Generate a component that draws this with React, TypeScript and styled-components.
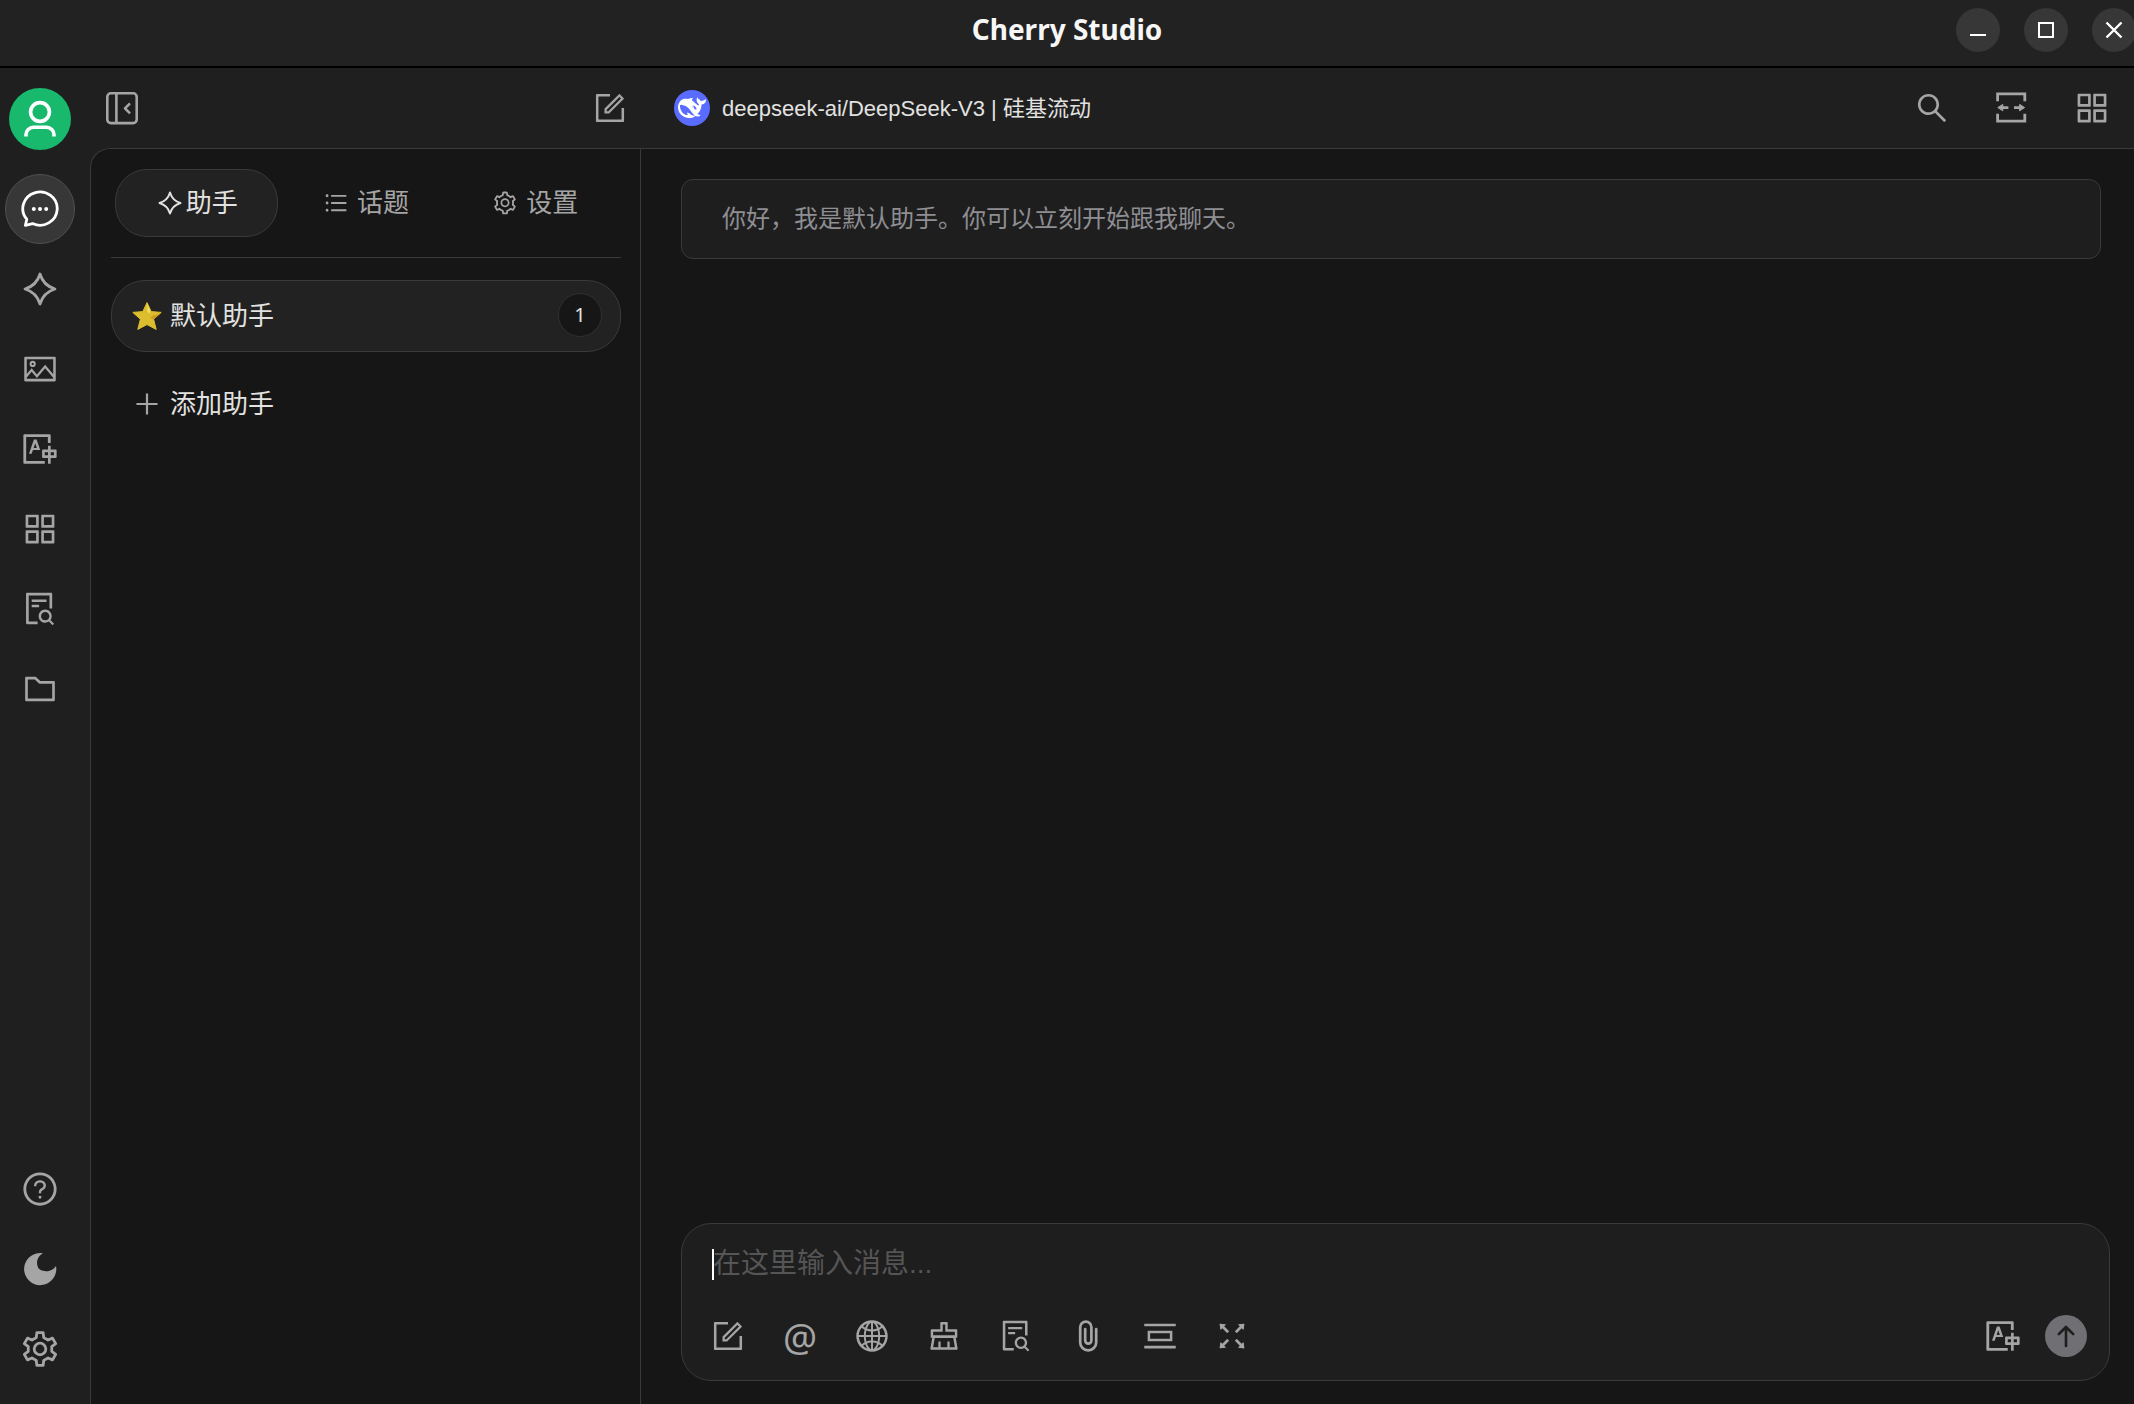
import React from "react";
import styled, { createGlobalStyle, css } from "styled-components";
import {
  AiOutlineAppstore,
  AiOutlineClear,
  AiOutlineFileSearch,
  AiOutlineFolder,
  AiOutlineForm,
  AiOutlineFullscreen,
  AiOutlineGlobal,
  AiOutlinePicCenter,
  AiOutlinePicture,
  AiOutlinePlus,
  AiOutlineQuestionCircle,
  AiOutlineSearch,
  AiOutlineSetting,
  AiOutlineTranslation,
  AiOutlineUnorderedList,
} from "react-icons/ai";

const color = {
  title: "#222222",
  chrome: "#1f1f1f",
  panel: "#161616",
  raised: "#222222",
  card: "#1e1e1e",
  border: "#3a3a3a",
  icon: "#a5a5a5",
  text: "#e2e2e0",
  muted: "#8e8e93",
  green: "#18b96c",
};

const GlobalStyle = createGlobalStyle`
  * { box-sizing: border-box; }
  body {
    margin: 0;
    background: ${color.chrome};
    color: ${color.text};
    font-family: "Liberation Sans", "Noto Sans CJK SC", sans-serif;
  }
  button, textarea { font-family: inherit; }
`;

const Window = styled.div`
  display: flex;
  flex-direction: column;
  height: 100vh;
  overflow: hidden;
`;

const TitleBar = styled.header`
  display: grid;
  grid-template-columns: 1fr auto 1fr;
  align-items: center;
  height: 68px;
  padding-bottom: 6px;
  background: ${color.title};
  border-bottom: 2px solid #000;
  flex: none;
`;

const WindowTitle = styled.h1`
  grid-column: 2;
  margin: 0 0 2px;
  color: #f7f7f7;
  font: 700 28px/40px "Noto Sans", sans-serif;
`;

const WindowControls = styled.div`
  display: flex;
  justify-content: flex-end;
  gap: 24px;
  margin-right: -2px;
`;

const bareButton = css`
  display: flex;
  align-items: center;
  justify-content: center;
  padding: 0;
  border: 0;
  background: none;
  color: ${color.icon};
  cursor: pointer;
`;

const WindowButton = styled.button`
  ${bareButton}
  width: 44px;
  height: 44px;
  border-radius: 50%;
  background: #373737;
  color: #fff;
`;

const Body = styled.div`
  display: flex;
  flex: 1;
  min-height: 0;
`;

const Rail = styled.nav`
  display: flex;
  flex-direction: column;
  justify-content: space-between;
  width: 80px;
  padding: 20px 5px;
  flex: none;
`;

const RailGroup = styled.div`
  display: flex;
  flex-direction: column;
  align-items: center;
  gap: 10px;
`;

const Avatar = styled.button`
  ${bareButton}
  width: 62px;
  height: 62px;
  margin-bottom: 14px;
  border-radius: 50%;
  background: ${color.green};
  color: #fff;
`;

const RailButton = styled.button<{ $active?: boolean }>`
  ${bareButton}
  width: 70px;
  height: 70px;
  border-radius: 50%;
  border: 1px solid ${(p) => (p.$active ? "#505050" : "transparent")};
  background: ${(p) => (p.$active ? "#373737" : "none")};
  color: ${(p) => (p.$active ? "#fff" : color.icon)};
`;

const Workspace = styled.div`
  display: flex;
  flex-direction: column;
  flex: 1;
  min-width: 0;
`;

const Toolbar = styled.div`
  display: flex;
  height: 80px;
  flex: none;
`;

const PanelToolbar = styled.div`
  display: flex;
  align-items: center;
  justify-content: space-between;
  width: 560px;
  padding: 0 8px 0 20px;
  flex: none;
`;

const ChatToolbar = styled.div`
  display: flex;
  align-items: center;
  justify-content: space-between;
  flex: 1;
  padding: 0 20px 0 34px;
`;

const ToolButton = styled.button`
  ${bareButton}
  width: 44px;
  height: 44px;
`;

const ToolGroup = styled.div`
  display: flex;
  gap: 36px;
`;

const ModelButton = styled.button`
  ${bareButton}
  gap: 12px;
  color: ${color.text};
  font-size: 22px;
  line-height: 36px;
`;

const ModelName = styled.span`
  padding-top: 2px;
`;

const ModelLogo = styled.span`
  display: flex;
  align-items: center;
  justify-content: center;
  width: 36px;
  height: 36px;
  border-radius: 50%;
  background: #5a6cff;
  color: #fff;
`;

const Content = styled.div`
  display: flex;
  flex: 1;
  min-height: 0;
  margin-left: 10px;
  border: solid ${color.border};
  border-width: 1px 0 0 1px;
  border-top-left-radius: 20px;
  background: ${color.panel};
`;

const AssistantPanel = styled.aside`
  width: 550px;
  padding: 20px 19px 20px 20px;
  border-right: 1px solid ${color.border};
  flex: none;
`;

const Tabs = styled.div`
  display: flex;
  gap: 6px;
  padding: 0 4px 20px;
  border-bottom: 1px solid ${color.border};
  margin-bottom: 22px;
`;

const Tab = styled.button<{ $active?: boolean }>`
  ${bareButton}
  flex: 1;
  gap: ${(p) => (p.$active ? "2px" : "8px")};
  height: 68px;
  border-radius: 32px;
  border: 1px solid ${(p) => (p.$active ? color.border : "transparent")};
  background: ${(p) => (p.$active ? color.raised : "none")};
  color: ${(p) => (p.$active ? color.text : color.icon)};
  font-size: 26px;
  line-height: 40px;
`;

const AssistantItem = styled.button<{ $active?: boolean }>`
  ${bareButton}
  justify-content: flex-start;
  gap: 8px;
  width: 100%;
  height: 72px;
  padding: 0 18px 0 20px;
  margin-bottom: 16px;
  border-radius: 34px;
  border: 1px solid ${(p) => (p.$active ? color.border : "transparent")};
  background: ${(p) => (p.$active ? color.raised : "none")};
  color: ${color.text};
  font-size: 26px;
  line-height: 40px;
`;

const ItemIcon = styled.span`
  display: flex;
  justify-content: center;
  width: 30px;
  color: ${color.icon};
`;

const CountBadge = styled.span`
  display: flex;
  align-items: center;
  justify-content: center;
  width: 44px;
  height: 44px;
  margin: 0 0 2px auto;
  border: 1px solid #303030;
  border-radius: 50%;
  background: ${color.panel};
  font: 20px/24px "Noto Sans", sans-serif;
`;

const Chat = styled.main`
  display: flex;
  flex-direction: column;
  justify-content: space-between;
  flex: 1;
  min-width: 0;
  padding: 30px 24px 23px 40px;
`;

const Greeting = styled.p`
  margin: 0 9px 0 0;
  padding: 19px 40px;
  border: 1px solid ${color.border};
  border-radius: 12px;
  background: ${color.card};
  color: ${color.muted};
  font-size: 24px;
  line-height: 40px;
`;

const Composer = styled.form`
  padding: 20px 22px 14px 16px;
  border: 1px solid ${color.border};
  border-radius: 30px;
  background: ${color.card};
`;

const InputRow = styled.div`
  display: flex;
  align-items: center;
  padding-left: 14px;
`;

const Caret = styled.span`
  width: 2px;
  height: 31px;
  margin-right: -1px;
  background: #fff;
`;

const MessageInput = styled.textarea`
  flex: 1;
  height: 40px;
  padding: 0;
  border: 0;
  outline: 0;
  resize: none;
  overflow: hidden;
  background: none;
  color: ${color.text};
  font-size: 28px;
  line-height: 40px;
  &::placeholder { color: #555555; }
`;

const ComposerTools = styled.div`
  display: flex;
  align-items: center;
  gap: 12px;
  height: 60px;
  margin-top: 22px;
`;

const ComposerButton = styled.button`
  ${bareButton}
  width: 60px;
  height: 60px;
  font: 38px/40px "Noto Sans", sans-serif;
`;

const SendGroup = styled.div`
  display: flex;
  align-items: center;
  gap: 12px;
  margin-left: auto;
`;

const SendButton = styled.button`
  ${bareButton}
  width: 42px;
  height: 42px;
  border-radius: 50%;
  background: #6f6f74;
  color: ${color.card};
`;

type DrawingProps = { size?: number; box?: number; weight?: number; children: React.ReactNode };

const Drawing = ({ size = 40, box = 40, weight = 3, children }: DrawingProps) => (
  <svg
    width={size}
    height={size}
    viewBox={`0 0 ${box} ${box}`}
    fill="none"
    stroke="currentColor"
    strokeWidth={weight}
    strokeLinejoin="round"
    aria-hidden="true"
  >
    {children}
  </svg>
);

const UserIcon = () => (
  <Drawing weight={3.6}>
    <circle cx="20" cy="13" r="9.4" />
    <path d="M6 37.4v-1.6a7.5 7.5 0 0 1 7.5-7.5h13a7.5 7.5 0 0 1 7.5 7.5v1.6" />
  </Drawing>
);

const ChatIcon = () => (
  <Drawing weight={2.8}>
    <path d="M5.400 36.400 6.800 30.200A17.200 16.600 0 1 1 12.700 34.600Z" />
    <g fill="currentColor" stroke="none">
      <circle cx="13.8" cy="20" r="2" />
      <circle cx="20" cy="20" r="2" />
      <circle cx="26.2" cy="20" r="2" />
    </g>
  </Drawing>
);

const SparkIcon = ({ size = 40, weight = 2.8 }: { size?: number; weight?: number }) => (
  <Drawing size={size} weight={weight}>
    <path d="M20 5Q23.4 16.6 35 20Q23.4 23.4 20 35Q16.6 23.4 5 20Q16.6 16.6 20 5Z" />
  </Drawing>
);

const MoonIcon = () => (
  <Drawing>
    <path
      fill="currentColor"
      stroke="none"
      d="M23 4.2A10.8 10.8 0 0 0 18.6 19.4A11.6 11.6 0 0 0 36 17A16.1 16.1 0 1 1 23 4.2Z"
    />
  </Drawing>
);

/* Six-toothed gear outline, built tooth by tooth round the centre. */
const gearOutline = () => {
  const at = (deg: number, r: number) => {
    const a = (deg * Math.PI) / 180;
    return `${(20 + r * Math.cos(a)).toFixed(2)} ${(20 + r * Math.sin(a)).toFixed(2)}`;
  };
  return (
    [0, 1, 2, 3, 4, 5]
      .map((i) => {
        const t = -90 + i * 60;
        return `${i ? "L" : "M"}${at(t - 18, 12)}L${at(t - 11, 16.6)}L${at(t + 11, 16.6)}L${at(t + 18, 12)}`;
      })
      .join("") + "Z"
  );
};

const GearIcon = () => (
  <Drawing weight={2.8}>
    <path d={gearOutline()} />
    <circle cx="20" cy="20" r="5.8" />
  </Drawing>
);

const CollapseIcon = () => (
  <Drawing weight={2.6}>
    <rect x="5.3" y="5.3" width="29.4" height="29.8" rx="3.6" />
    <path d="M14.4 5.3v29.8M28 15.4l-5 5 5 5" />
  </Drawing>
);

const WidthIcon = () => (
  <Drawing weight={2.8}>
    <path strokeLinejoin="miter" d="M5.6 13.2V5.800h27.200v7.400M5.600 25.800v7.400h27.200v-7.400" />
    <path d="M9 19.600h7.400M22 19.600h7.400" />
    <path
      fill="currentColor"
      strokeWidth="1"
      d="M5.800 19.600l5-3.200v6.400zM32.600 19.600l-5-3.200v6.400z"
    />
  </Drawing>
);

const ClipIcon = () => (
  <Drawing weight={2.7}>
    <path
      strokeLinecap="round"
      d="M28.200 13.200V26.400a8 8 0 0 1-16 0V11.200a5.600 5.600 0 0 1 11.200 0V24.600a3.100 3.100 0 0 1-6.200 0V13.200"
    />
  </Drawing>
);

const StarIcon = () => (
  <svg width="30" height="30" viewBox="0 0 30 30" aria-hidden="true">
    <path
      fill="#dcbd2e"
      stroke="#dcbd2e"
      strokeWidth="1"
      strokeLinejoin="round"
      d="M15 1.6 19.2 10.6 29.2 11.4 21.6 18.2 24.2 28.4 15 23.6 5.8 28.4 8.4 18.2.8 11.4 10.8 10.6Z"
    />
    <path fill="#ece05c" d="M15 2 18.4 10 17.5 12.5 15.5 11Z" />
    <path fill="#d09a1e" d="M21.5 14.5 27.5 13 21.5 18.5 18 16.5Z" />
  </svg>
);

const DeepSeekIcon = () => (
  <svg width="28" height="28" viewBox="0 0 24 24" fill="currentColor" aria-hidden="true">
    <path d="M23.748 4.482c-.254-.124-.364.113-.512.234-.051.039-.094.09-.137.136-.372.397-.806.657-1.373.626-.829-.046-1.537.214-2.163.848-.133-.782-.575-1.248-1.247-1.548-.352-.156-.708-.311-.955-.65-.172-.241-.219-.51-.305-.774-.055-.16-.11-.323-.293-.35-.2-.031-.278.136-.356.276-.313.572-.434 1.202-.422 1.84.027 1.436.633 2.58 1.838 3.393.137.093.172.187.129.323-.082.28-.18.552-.266.833-.055.179-.137.217-.329.14a5.526 5.526 0 01-1.736-1.18c-.857-.828-1.631-1.742-2.597-2.458a11.365 11.365 0 00-.689-.471c-.985-.957.13-1.743.388-1.836.27-.098.093-.432-.779-.428-.872.004-1.67.295-2.687.684a3.055 3.055 0 01-.465.137 9.597 9.597 0 00-2.883-.102c-1.885.21-3.39 1.102-4.497 2.623C.082 8.606-.231 10.684.152 12.85c.403 2.284 1.569 4.175 3.36 5.653 1.858 1.533 3.997 2.284 6.438 2.14 1.482-.085 3.133-.284 4.994-1.86.47.234.962.327 1.78.397.63.059 1.236-.03 1.705-.128.735-.156.684-.837.419-.961-2.155-1.004-1.682-.595-2.113-.926 1.096-1.296 2.746-2.642 3.392-7.003.05-.347.007-.565 0-.845-.004-.17.035-.237.23-.256a4.173 4.173 0 001.545-.475c1.396-.763 1.96-2.015 2.093-3.517.02-.23-.004-.467-.247-.588zM11.581 18c-2.089-1.642-3.102-2.183-3.52-2.16-.392.024-.321.471-.235.763.09.288.207.486.371.739.114.167.192.416-.113.603-.673.416-1.842-.14-1.897-.167-1.361-.802-2.5-1.86-3.301-3.307-.774-1.393-1.224-2.887-1.298-4.482-.02-.386.093-.522.477-.592a4.696 4.696 0 011.529-.039c2.132.312 3.946 1.265 5.468 2.774.868.86 1.525 1.887 2.202 2.891.72 1.066 1.494 2.082 2.48 2.914.348.292.625.514.891.677-.802.09-2.14.11-3.054-.614zm1-6.44a.306.306 0 01.415-.287.302.302 0 01.2.288.306.306 0 01-.31.307.303.303 0 01-.304-.308zm3.11 1.596c-.2.081-.399.151-.59.16a1.245 1.245 0 01-.798-.254c-.274-.23-.47-.358-.552-.758a1.73 1.73 0 01.016-.588c.07-.327-.008-.537-.239-.727-.187-.156-.426-.199-.688-.199a.559.559 0 01-.254-.078c-.11-.054-.2-.19-.114-.358.028-.054.16-.186.192-.21.356-.202.767-.136 1.146.016.352.144.618.408 1.001.782.391.451.462.576.685.914.176.265.336.537.445.848.067.195-.019.354-.25.452z" />
  </svg>
);

const ArrowUpIcon = () => (
  <Drawing size={42} box={42} weight={2.6}>
    <path strokeLinecap="round" d="M21 31V12.6M13.800 19.200 21 12l7.200 7.200" />
  </Drawing>
);

const railItems = [
  { label: "聊天", icon: <ChatIcon />, active: true },
  { label: "智能体", icon: <SparkIcon /> },
  { label: "绘画", icon: <AiOutlinePicture size={36} /> },
  { label: "翻译", icon: <AiOutlineTranslation size={38} /> },
  { label: "小程序", icon: <AiOutlineAppstore size={40} /> },
  { label: "知识库", icon: <AiOutlineFileSearch size={38} /> },
  { label: "文件", icon: <AiOutlineFolder size={38} /> },
];

const railFooter = [
  { label: "帮助", icon: <AiOutlineQuestionCircle size={38} /> },
  { label: "主题", icon: <MoonIcon /> },
  { label: "设置", icon: <GearIcon /> },
];

const composerTools = [
  { label: "新话题", icon: <AiOutlineForm size={36} /> },
  { label: "提及模型", icon: "@" },
  { label: "联网搜索", icon: <AiOutlineGlobal size={36} /> },
  { label: "清空消息", icon: <AiOutlineClear size={36} /> },
  { label: "选择知识库", icon: <AiOutlineFileSearch size={36} /> },
  { label: "上传附件", icon: <ClipIcon /> },
  { label: "清除上下文", icon: <AiOutlinePicCenter size={36} /> },
  { label: "展开", icon: <AiOutlineFullscreen size={36} /> },
];

export default function App() {
  return (
    <Window>
      <GlobalStyle />
      <TitleBar>
        <WindowTitle>Cherry Studio</WindowTitle>
        <WindowControls>
          <WindowButton aria-label="最小化">
            <Drawing size={20} box={20} weight={2}>
              <path d="M2 15h16" />
            </Drawing>
          </WindowButton>
          <WindowButton aria-label="最大化">
            <Drawing size={20} box={20} weight={2}>
              <path strokeLinejoin="miter" d="M3 3h14v14H3z" />
            </Drawing>
          </WindowButton>
          <WindowButton aria-label="关闭">
            <Drawing size={20} box={20} weight={2.4}>
              <path d="M2.5 2.5l15 15M17.5 2.5l-15 15" />
            </Drawing>
          </WindowButton>
        </WindowControls>
      </TitleBar>
      <Body>
        <Rail>
          <RailGroup>
            <Avatar aria-label="用户">
              <UserIcon />
            </Avatar>
            {railItems.map((item) => (
              <RailButton key={item.label} aria-label={item.label} $active={item.active}>
                {item.icon}
              </RailButton>
            ))}
          </RailGroup>
          <RailGroup>
            {railFooter.map((item) => (
              <RailButton key={item.label} aria-label={item.label}>
                {item.icon}
              </RailButton>
            ))}
          </RailGroup>
        </Rail>
        <Workspace>
          <Toolbar>
            <PanelToolbar>
              <ToolButton aria-label="收起侧栏">
                <CollapseIcon />
              </ToolButton>
              <ToolButton aria-label="新建话题">
                <AiOutlineForm size={36} />
              </ToolButton>
            </PanelToolbar>
            <ChatToolbar>
              <ModelButton>
                <ModelLogo>
                  <DeepSeekIcon />
                </ModelLogo>
                <ModelName>deepseek-ai/DeepSeek-V3 | 硅基流动</ModelName>
              </ModelButton>
              <ToolGroup>
                <ToolButton aria-label="搜索">
                  <AiOutlineSearch size={36} />
                </ToolButton>
                <ToolButton aria-label="宽度">
                  <WidthIcon />
                </ToolButton>
                <ToolButton aria-label="小程序">
                  <AiOutlineAppstore size={40} />
                </ToolButton>
              </ToolGroup>
            </ChatToolbar>
          </Toolbar>
          <Content>
            <AssistantPanel>
              <Tabs>
                <Tab $active>
                  <SparkIcon size={28} />
                  助手
                </Tab>
                <Tab>
                  <AiOutlineUnorderedList size={26} />
                  话题
                </Tab>
                <Tab>
                  <AiOutlineSetting size={26} />
                  设置
                </Tab>
              </Tabs>
              <AssistantItem $active>
                <ItemIcon>
                  <StarIcon />
                </ItemIcon>
                默认助手
                <CountBadge>1</CountBadge>
              </AssistantItem>
              <AssistantItem>
                <ItemIcon>
                  <AiOutlinePlus size={30} />
                </ItemIcon>
                添加助手
              </AssistantItem>
            </AssistantPanel>
            <Chat>
              <Greeting>你好，我是默认助手。你可以立刻开始跟我聊天。</Greeting>
              <Composer onSubmit={(e) => e.preventDefault()}>
                <InputRow>
                  <Caret />
                  <MessageInput rows={1} aria-label="消息" placeholder="在这里输入消息..." />
                </InputRow>
                <ComposerTools>
                  {composerTools.map((tool) => (
                    <ComposerButton key={tool.label} type="button" aria-label={tool.label}>
                      {tool.icon}
                    </ComposerButton>
                  ))}
                  <SendGroup>
                    <ComposerButton type="button" aria-label="翻译">
                      <AiOutlineTranslation size={38} />
                    </ComposerButton>
                    <SendButton aria-label="发送">
                      <ArrowUpIcon />
                    </SendButton>
                  </SendGroup>
                </ComposerTools>
              </Composer>
            </Chat>
          </Content>
        </Workspace>
      </Body>
    </Window>
  );
}
